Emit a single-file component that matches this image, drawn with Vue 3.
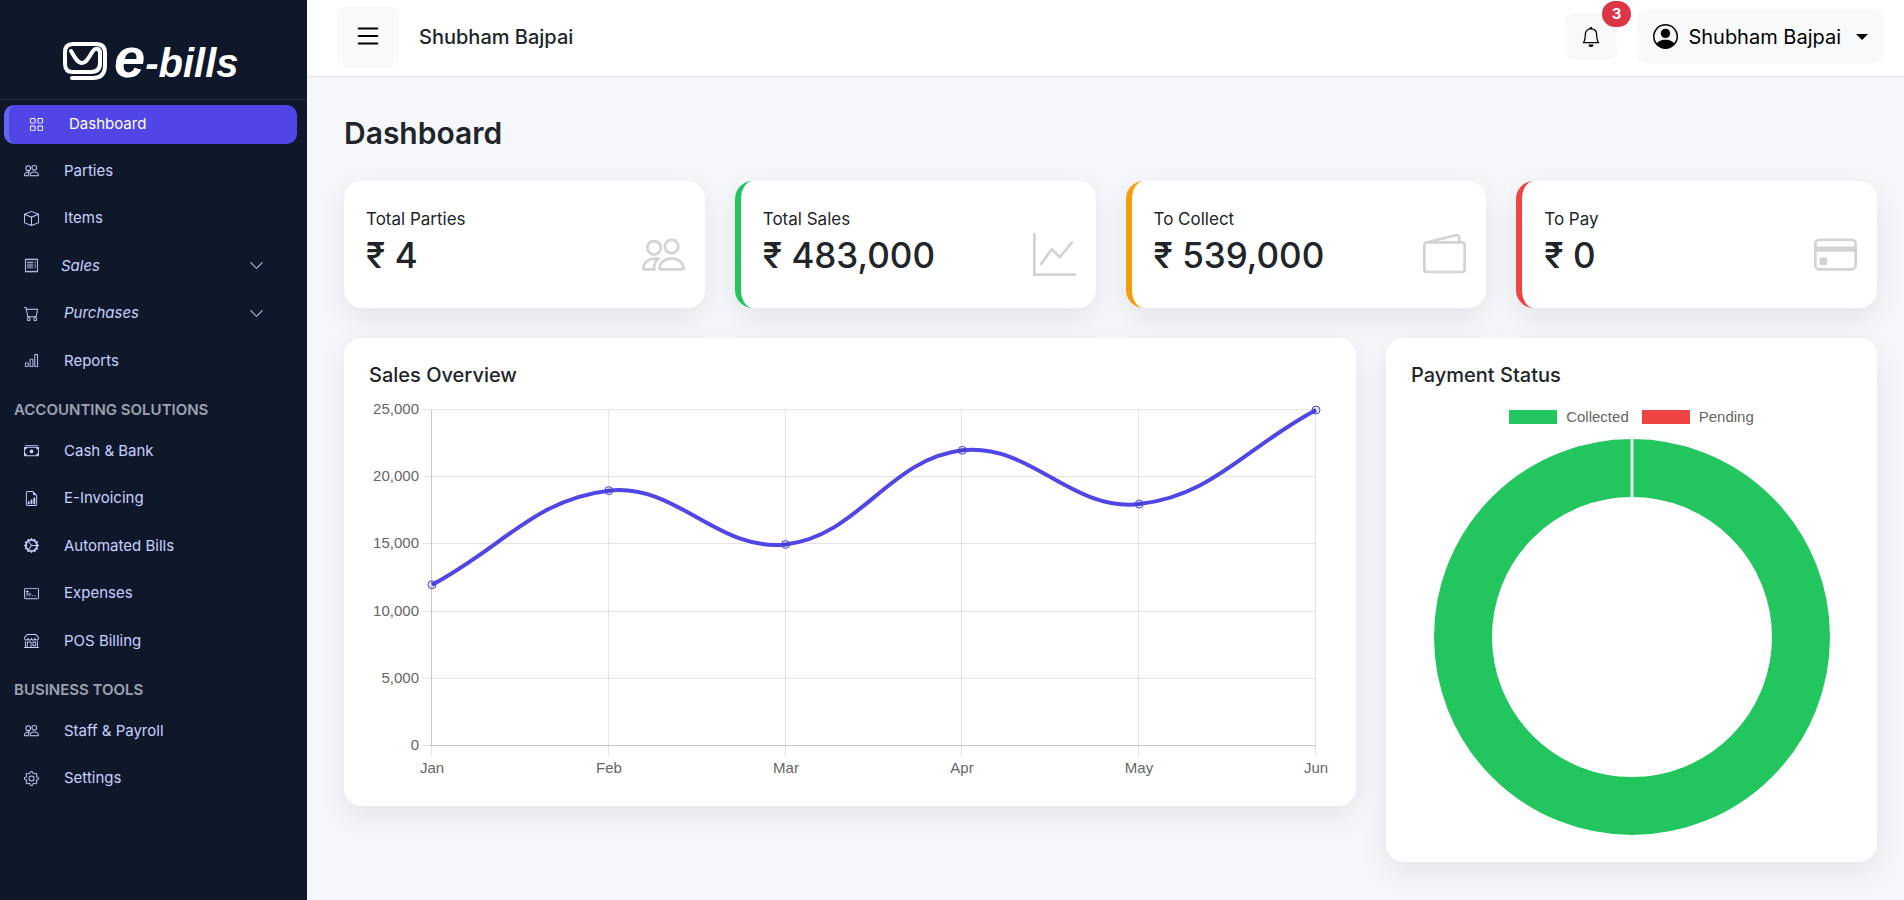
<script setup>
import { computed } from 'vue'

const paths = {
  grid: ['M1 2.5A1.5 1.5 0 0 1 2.5 1h3A1.5 1.5 0 0 1 7 2.5v3A1.5 1.5 0 0 1 5.5 7h-3A1.5 1.5 0 0 1 1 5.5zM2.5 2a.5.5 0 0 0-.5.5v3a.5.5 0 0 0 .5.5h3a.5.5 0 0 0 .5-.5v-3a.5.5 0 0 0-.5-.5zm6.5.5A1.5 1.5 0 0 1 10.5 1h3A1.5 1.5 0 0 1 15 2.5v3A1.5 1.5 0 0 1 13.5 7h-3A1.5 1.5 0 0 1 9 5.5zm1.5-.5a.5.5 0 0 0-.5.5v3a.5.5 0 0 0 .5.5h3a.5.5 0 0 0 .5-.5v-3a.5.5 0 0 0-.5-.5zM1 10.5A1.5 1.5 0 0 1 2.5 9h3A1.5 1.5 0 0 1 7 10.5v3A1.5 1.5 0 0 1 5.5 15h-3A1.5 1.5 0 0 1 1 13.5zm1.5-.5a.5.5 0 0 0-.5.5v3a.5.5 0 0 0 .5.5h3a.5.5 0 0 0 .5-.5v-3a.5.5 0 0 0-.5-.5zm6.5.5A1.5 1.5 0 0 1 10.5 9h3a1.5 1.5 0 0 1 1.5 1.5v3a1.5 1.5 0 0 1-1.5 1.5h-3A1.5 1.5 0 0 1 9 13.5zm1.5-.5a.5.5 0 0 0-.5.5v3a.5.5 0 0 0 .5.5h3a.5.5 0 0 0 .5-.5v-3a.5.5 0 0 0-.5-.5z'],
  people: ['M15 14s1 0 1-1-1-4-5-4-5 3-5 4 1 1 1 1zm-7.978-1L7 12.996c.001-.264.167-1.03.76-1.72C8.312 10.629 9.282 10 11 10c1.717 0 2.687.63 3.24 1.276.593.69.758 1.457.76 1.72l-.008.002-.014.002zM11 7a2 2 0 1 0 0-4 2 2 0 0 0 0 4m3-2a3 3 0 1 1-6 0 3 3 0 0 1 6 0M6.936 9.28a6 6 0 0 0-1.23-.247A7 7 0 0 0 5 9c-4 0-5 3-5 4q0 1 1 1h4.216A2.24 2.24 0 0 1 5 13c0-1.01.377-2.042 1.09-2.904.243-.294.526-.569.846-.816M4.92 10A5.5 5.5 0 0 0 4 13H1c0-.26.164-1.03.76-1.724.545-.636 1.492-1.256 3.16-1.275ZM1.5 5.5a3 3 0 1 1 6 0 3 3 0 0 1-6 0m3-2a2 2 0 1 0 0 4 2 2 0 0 0 0-4'],
  box: ['M8.186 1.113a.5.5 0 0 0-.372 0L1.846 3.5 8 5.961 14.154 3.5zM15 4.239l-6.5 2.6v7.922l6.5-2.6V4.24zM7.5 14.762V6.838L1 4.239v7.923zM7.443.184a1.5 1.5 0 0 1 1.114 0l7.129 2.852A.5.5 0 0 1 16 3.5v8.662a1 1 0 0 1-.629.928l-7.185 2.874a.5.5 0 0 1-.372 0L.63 13.09a1 1 0 0 1-.63-.928V3.5a.5.5 0 0 1 .314-.464z'],
  receipt: [
    'M1.92.506a.5.5 0 0 1 .434.14L3 1.293l.646-.647a.5.5 0 0 1 .708 0L5 1.293l.646-.647a.5.5 0 0 1 .708 0L7 1.293l.646-.647a.5.5 0 0 1 .708 0L9 1.293l.646-.647a.5.5 0 0 1 .708 0l.646.647.646-.647a.5.5 0 0 1 .708 0l.646.647.646-.647a.5.5 0 0 1 .801.13l.5 1A.5.5 0 0 1 15 2v12a.5.5 0 0 1-.053.224l-.5 1a.5.5 0 0 1-.8.13L13 14.707l-.646.647a.5.5 0 0 1-.708 0L11 14.707l-.646.647a.5.5 0 0 1-.708 0L9 14.707l-.646.647a.5.5 0 0 1-.708 0L7 14.707l-.646.647a.5.5 0 0 1-.708 0L5 14.707l-.646.647a.5.5 0 0 1-.708 0L3 14.707l-.646.647a.5.5 0 0 1-.801-.13l-.5-1A.5.5 0 0 1 1 14V2a.5.5 0 0 1 .053-.224l.5-1a.5.5 0 0 1 .367-.27m.217 1.338L2 2.118v11.764l.137.274.51-.51a.5.5 0 0 1 .707 0l.646.647.646-.646a.5.5 0 0 1 .708 0l.646.646.646-.646a.5.5 0 0 1 .708 0l.646.646.646-.646a.5.5 0 0 1 .708 0l.646.646.646-.646a.5.5 0 0 1 .708 0l.646.646.646-.646a.5.5 0 0 1 .708 0l.509.509.137-.274V2.118l-.137-.274-.51.51a.5.5 0 0 1-.707 0L12 1.707l-.646.647a.5.5 0 0 1-.708 0L10 1.707l-.646.647a.5.5 0 0 1-.708 0L8 1.707l-.646.647a.5.5 0 0 1-.708 0L6 1.707l-.646.647a.5.5 0 0 1-.708 0L4 1.707l-.646.647a.5.5 0 0 1-.708 0z',
    'M3 4.5a.5.5 0 0 1 .5-.5h6a.5.5 0 1 1 0 1h-6a.5.5 0 0 1-.5-.5m0 2a.5.5 0 0 1 .5-.5h6a.5.5 0 1 1 0 1h-6a.5.5 0 0 1-.5-.5m0 2a.5.5 0 0 1 .5-.5h6a.5.5 0 1 1 0 1h-6a.5.5 0 0 1-.5-.5m0 2a.5.5 0 0 1 .5-.5h6a.5.5 0 0 1 0 1h-6a.5.5 0 0 1-.5-.5m8-6a.5.5 0 0 1 .5-.5h1a.5.5 0 0 1 0 1h-1a.5.5 0 0 1-.5-.5m0 2a.5.5 0 0 1 .5-.5h1a.5.5 0 0 1 0 1h-1a.5.5 0 0 1-.5-.5m0 2a.5.5 0 0 1 .5-.5h1a.5.5 0 0 1 0 1h-1a.5.5 0 0 1-.5-.5m0 2a.5.5 0 0 1 .5-.5h1a.5.5 0 0 1 0 1h-1a.5.5 0 0 1-.5-.5'
  ],
  cart: ['M0 1.5A.5.5 0 0 1 .5 1H2a.5.5 0 0 1 .485.379L2.89 3H14.5a.5.5 0 0 1 .491.592l-1.5 8A.5.5 0 0 1 13 12H4a.5.5 0 0 1-.491-.408L2.01 3.607 1.61 2H.5a.5.5 0 0 1-.5-.5M3.102 4l1.313 7h8.17l1.313-7zM5 12a2 2 0 1 0 0 4 2 2 0 0 0 0-4m7 0a2 2 0 1 0 0 4 2 2 0 0 0 0-4m-7 1a1 1 0 1 1 0 2 1 1 0 0 1 0-2m7 0a1 1 0 1 1 0 2 1 1 0 0 1 0-2'],
  bars: ['M4 11H2v3h2zm5-4H7v7h2zm5-5v12h-2V2zm-2-1a1 1 0 0 0-1 1v12a1 1 0 0 0 1 1h2a1 1 0 0 0 1-1V2a1 1 0 0 0-1-1zM6 7a1 1 0 0 1 1-1h2a1 1 0 0 1 1 1v7a1 1 0 0 1-1 1H7a1 1 0 0 1-1-1zm-5 4a1 1 0 0 1 1-1h2a1 1 0 0 1 1 1v3a1 1 0 0 1-1 1H2a1 1 0 0 1-1-1z'],
  cash: [
    'M1 3a1 1 0 0 1 1-1h12a1 1 0 0 1 1 1zm7 8a2 2 0 1 0 0-4 2 2 0 0 0 0 4',
    'M0 5a1 1 0 0 1 1-1h14a1 1 0 0 1 1 1v8a1 1 0 0 1-1 1H1a1 1 0 0 1-1-1zm3 0a2 2 0 0 1-2 2v4a2 2 0 0 1 2 2h10a2 2 0 0 1 2-2V7a2 2 0 0 1-2-2z'
  ],
  invoice: [
    'M10 13.5a.5.5 0 0 0 .5.5h1a.5.5 0 0 0 .5-.5v-6a.5.5 0 0 0-.5-.5h-1a.5.5 0 0 0-.5.5zm-2.5.5a.5.5 0 0 1-.5-.5v-4a.5.5 0 0 1 .5-.5h1a.5.5 0 0 1 .5.5v4a.5.5 0 0 1-.5.5zm-3 0a.5.5 0 0 1-.5-.5v-2a.5.5 0 0 1 .5-.5h1a.5.5 0 0 1 .5.5v2a.5.5 0 0 1-.5.5z',
    'M14 14V4.5L9.5 0H4a2 2 0 0 0-2 2v12a2 2 0 0 0 2 2h8a2 2 0 0 0 2-2M9.5 3A1.5 1.5 0 0 0 11 4.5h2V14a1 1 0 0 1-1 1H4a1 1 0 0 1-1-1V2a1 1 0 0 1 1-1h5.5z'
  ],
  gearWide: ['M7.068.727c.243-.97 1.62-.97 1.864 0l.071.286a.96.96 0 0 0 1.622.434l.205-.211c.695-.719 1.888-.03 1.613.931l-.08.284a.96.96 0 0 0 1.187 1.187l.283-.081c.96-.275 1.65.918.931 1.613l-.211.205a.96.96 0 0 0 .434 1.622l.286.071c.97.243.97 1.62 0 1.864l-.286.071a.96.96 0 0 0-.434 1.622l.211.205c.719.695.03 1.888-.931 1.613l-.284-.08a.96.96 0 0 0-1.187 1.187l.081.283c.275.96-.918 1.65-1.613.931l-.205-.211a.96.96 0 0 0-1.622.434l-.071.286c-.243.97-1.62.97-1.864 0l-.071-.286a.96.96 0 0 0-1.622-.434l-.205.211c-.695.719-1.888.03-1.613-.931l.08-.284a.96.96 0 0 0-1.186-1.187l-.284.081c-.96.275-1.65-.918-.931-1.613l.211-.205a.96.96 0 0 0-.434-1.622l-.286-.071c-.97-.243-.97-1.62 0-1.864l.286-.071a.96.96 0 0 0 .434-1.622l-.211-.205c-.719-.695-.03-1.888.931-1.613l.284.08a.96.96 0 0 0 1.187-1.186l-.081-.284c-.275-.96.918-1.65 1.613-.931l.205.211a.96.96 0 0 0 1.622-.434zM12.973 8.5H8.25l-2.834 3.779A4.998 4.998 0 0 0 12.973 8.5m0-1a4.998 4.998 0 0 0-7.557-3.779l2.834 3.78zM5.048 3.967l-.087.065zm-.431.355A4.98 4.98 0 0 0 3.002 8c0 1.455.622 2.765 1.615 3.678L7.375 8zm.344 7.646.087.065z'],
  cardFront: [
    'M14 3a1 1 0 0 1 1 1v8a1 1 0 0 1-1 1H2a1 1 0 0 1-1-1V4a1 1 0 0 1 1-1zM2 2a2 2 0 0 0-2 2v8a2 2 0 0 0 2 2h12a2 2 0 0 0 2-2V4a2 2 0 0 0-2-2z',
    'M2 5.5a.5.5 0 0 1 .5-.5h2a.5.5 0 0 1 .5.5v1a.5.5 0 0 1-.5.5h-2a.5.5 0 0 1-.5-.5zm0 3a.5.5 0 0 1 .5-.5h5a.5.5 0 0 1 0 1h-5a.5.5 0 0 1-.5-.5m0 2a.5.5 0 0 1 .5-.5h1a.5.5 0 0 1 0 1h-1a.5.5 0 0 1-.5-.5m3 0a.5.5 0 0 1 .5-.5h1a.5.5 0 0 1 0 1h-1a.5.5 0 0 1-.5-.5m3 0a.5.5 0 0 1 .5-.5h1a.5.5 0 0 1 0 1h-1a.5.5 0 0 1-.5-.5m3 0a.5.5 0 0 1 .5-.5h1a.5.5 0 0 1 0 1h-1a.5.5 0 0 1-.5-.5'
  ],
  shop: ['M2.97 1.35A1 1 0 0 1 3.73 1h8.54a1 1 0 0 1 .76.35l2.609 3.044A1.5 1.5 0 0 1 16 5.37v.255a2.375 2.375 0 0 1-4.25 1.458A2.37 2.37 0 0 1 9.875 8 2.37 2.37 0 0 1 8 7.083 2.37 2.37 0 0 1 6.125 8a2.37 2.37 0 0 1-1.875-.917A2.375 2.375 0 0 1 0 5.625V5.37a1.5 1.5 0 0 1 .361-.976zm1.78 4.275a1.375 1.375 0 0 0 2.75 0 .5.5 0 0 1 1 0 1.375 1.375 0 0 0 2.75 0 .5.5 0 0 1 1 0 1.375 1.375 0 1 0 2.75 0V5.37a.5.5 0 0 0-.12-.325L12.27 2H3.73L1.12 5.045A.5.5 0 0 0 1 5.37v.255a1.375 1.375 0 0 0 2.75 0 .5.5 0 0 1 1 0M1.5 8.5A.5.5 0 0 1 2 9v6h1v-5a1 1 0 0 1 1-1h3a1 1 0 0 1 1 1v5h6V9a.5.5 0 0 1 1 0v6h.5a.5.5 0 0 1 0 1H.5a.5.5 0 0 1 0-1H1V9a.5.5 0 0 1 .5-.5M4 15h3v-5H4zm5-5a1 1 0 0 1 1-1h2a1 1 0 0 1 1 1v3a1 1 0 0 1-1 1h-2a1 1 0 0 1-1-1zm3 0h-2v3h2z'],
  gear: [
    'M8 4.754a3.246 3.246 0 1 0 0 6.492 3.246 3.246 0 0 0 0-6.492M5.754 8a2.246 2.246 0 1 1 4.492 0 2.246 2.246 0 0 1-4.492 0',
    'M9.796 1.343c-.527-1.79-3.065-1.79-3.592 0l-.094.319a.873.873 0 0 1-1.255.52l-.292-.16c-1.64-.892-3.433.902-2.54 2.541l.159.292a.873.873 0 0 1-.52 1.255l-.319.094c-1.79.527-1.79 3.065 0 3.592l.319.094a.873.873 0 0 1 .52 1.255l-.16.292c-.892 1.64.901 3.434 2.541 2.54l.292-.159a.873.873 0 0 1 1.255.52l.094.319c.527 1.79 3.065 1.79 3.592 0l.094-.319a.873.873 0 0 1 1.255-.52l.292.16c1.64.893 3.434-.902 2.54-2.541l-.159-.292a.873.873 0 0 1 .52-1.255l.319-.094c1.79-.527 1.79-3.065 0-3.592l-.319-.094a.873.873 0 0 1-.52-1.255l.16-.292c.893-1.64-.902-3.433-2.541-2.54l-.292.159a.873.873 0 0 1-1.255-.52zm-2.633.283c.246-.835 1.428-.835 1.674 0l.094.319a1.873 1.873 0 0 0 2.693 1.115l.291-.16c.764-.415 1.6.42 1.184 1.185l-.159.292a1.873 1.873 0 0 0 1.116 2.692l.318.094c.835.246.835 1.428 0 1.674l-.319.094a1.873 1.873 0 0 0-1.115 2.693l.16.291c.415.764-.42 1.6-1.185 1.184l-.291-.159a1.873 1.873 0 0 0-2.693 1.116l-.094.318c-.246.835-1.428.835-1.674 0l-.094-.319a1.873 1.873 0 0 0-2.692-1.115l-.292.16c-.764.415-1.6-.42-1.184-1.185l.159-.291A1.873 1.873 0 0 0 1.945 8.93l-.319-.094c-.835-.246-.835-1.428 0-1.674l.319-.094A1.873 1.873 0 0 0 3.06 4.377l-.16-.292c-.415-.764.42-1.6 1.185-1.184l.292.159a1.873 1.873 0 0 0 2.692-1.115z'
  ],
  chevron: ['M1.646 4.646a.5.5 0 0 1 .708 0L8 10.293l5.646-5.647a.5.5 0 0 1 .708.708l-6 6a.5.5 0 0 1-.708 0l-6-6a.5.5 0 0 1 0-.708'],
  graph: ['M0 0h1v15h15v1H0zm14.817 3.113a.5.5 0 0 1 .07.704l-4.5 5.5a.5.5 0 0 1-.74.037L7.06 6.767l-3.656 5.027a.5.5 0 0 1-.808-.588l4-5.5a.5.5 0 0 1 .758-.06l2.609 2.61 4.15-5.073a.5.5 0 0 1 .704-.07'],
  wallet: ['M12.136.326A1.5 1.5 0 0 1 14 1.78V3h.5A1.5 1.5 0 0 1 16 4.5v9a1.5 1.5 0 0 1-1.5 1.5h-13A1.5 1.5 0 0 1 0 13.5v-9a1.5 1.5 0 0 1 1.432-1.499zM5.562 3H13V1.78a.5.5 0 0 0-.621-.484zM1.5 4a.5.5 0 0 0-.5.5v9a.5.5 0 0 0 .5.5h13a.5.5 0 0 0 .5-.5v-9a.5.5 0 0 0-.5-.5z'],
  card: [
    'M0 4a2 2 0 0 1 2-2h12a2 2 0 0 1 2 2v8a2 2 0 0 1-2 2H2a2 2 0 0 1-2-2zm2-1a1 1 0 0 0-1 1v1h14V4a1 1 0 0 0-1-1zm13 4H1v5a1 1 0 0 0 1 1h12a1 1 0 0 0 1-1z',
    'M2 10a1 1 0 0 1 1-1h1a1 1 0 0 1 1 1v1a1 1 0 0 1-1 1H3a1 1 0 0 1-1-1z'
  ]
}

const groups = [
  {
    title: '',
    items: [
      { label: 'Dashboard', icon: 'grid', active: true },
      { label: 'Parties', icon: 'people' },
      { label: 'Items', icon: 'box' },
      { label: 'Sales', icon: 'receipt', menu: true, tight: true },
      { label: 'Purchases', icon: 'cart', menu: true },
      { label: 'Reports', icon: 'bars' }
    ]
  },
  {
    title: 'ACCOUNTING SOLUTIONS',
    items: [
      { label: 'Cash & Bank', icon: 'cash' },
      { label: 'E-Invoicing', icon: 'invoice' },
      { label: 'Automated Bills', icon: 'gearWide' },
      { label: 'Expenses', icon: 'cardFront' },
      { label: 'POS Billing', icon: 'shop' }
    ]
  },
  {
    title: 'BUSINESS TOOLS',
    items: [
      { label: 'Staff & Payroll', icon: 'people' },
      { label: 'Settings', icon: 'gear' }
    ]
  }
]

const stats = [
  { label: 'Total Parties', value: '₹ 4', icon: 'people', tone: '' },
  { label: 'Total Sales', value: '₹ 483,000', icon: 'graph', tone: 'green' },
  { label: 'To Collect', value: '₹ 539,000', icon: 'wallet', tone: 'amber' },
  { label: 'To Pay', value: '₹ 0', icon: 'card', tone: 'red' }
]

const months = ['Jan', 'Feb', 'Mar', 'Apr', 'May', 'Jun']
const sales = [12000, 19000, 15000, 22000, 18000, 25000]
const plot = { left: 63, right: 947, top: 10, bottom: 346, max: 25000 }

const yOf = v => plot.bottom - (v / plot.max) * (plot.bottom - plot.top)
const xOf = i => plot.left + (i * (plot.right - plot.left)) / (months.length - 1)

const yTicks = [25000, 20000, 15000, 10000, 5000, 0].map(v => ({
  label: v.toLocaleString('en-US'),
  zero: v === 0,
  y: Math.round(yOf(v))
}))
const xTicks = months.map((label, i) => ({ label, x: Math.round(xOf(i)) }))
const points = sales.map((v, i) => ({ x: xOf(i), y: yOf(v) }))

// Cubic spline whose handles follow the neighbouring points, tension 0.4
const line = computed(() => {
  const handles = points.map((p, i) => {
    const prev = points[i - 1] || p
    const next = points[i + 1] || p
    const d01 = Math.hypot(p.x - prev.x, p.y - prev.y)
    const d12 = Math.hypot(next.x - p.x, next.y - p.y)
    const a = (0.4 * d01) / (d01 + d12)
    const b = (0.4 * d12) / (d01 + d12)
    const clamp = y => Math.min(plot.bottom, Math.max(plot.top, y))
    return {
      inX: p.x - a * (next.x - prev.x),
      inY: clamp(p.y - a * (next.y - prev.y)),
      outX: p.x + b * (next.x - prev.x),
      outY: clamp(p.y + b * (next.y - prev.y))
    }
  })
  let d = `M${points[0].x} ${points[0].y}`
  for (let i = 1; i < points.length; i++) {
    const h0 = handles[i - 1]
    const h1 = handles[i]
    d += `C${h0.outX} ${h0.outY} ${h1.inX} ${h1.inY} ${points[i].x} ${points[i].y}`
  }
  return d
})
</script>

<template>
  <div class="app">
    <aside class="sidebar">
      <a class="logo" href="#" aria-label="e-bills">
        <svg class="logo-mark" viewBox="0 0 44 38" aria-hidden="true">
          <path d="M8 9C11 14 14 21 19 21S26 14 30 9C33 5 37 7 37 11V21Q37 30 28 30H10Q2 30 2 22V10Q2 2 10 2H33Q42 2 42 11V23Q42 36 30 36H9" />
        </svg>
        <span class="logo-text"><span class="logo-e">e</span>-bills</span>
      </a>
      <nav class="menu">
        <section v-for="g in groups" :key="g.title">
          <h2 v-if="g.title" class="menu-title">{{ g.title }}</h2>
          <a
            v-for="item in g.items"
            :key="item.label"
            href="#"
            class="menu-item"
            :class="{ active: item.active, parent: item.menu, tight: item.tight }"
          >
            <svg class="menu-icon" viewBox="0 0 16 16" aria-hidden="true">
              <path v-for="d in paths[item.icon]" :key="d" :d="d" />
            </svg>
            <span class="menu-label">{{ item.label }}</span>
            <svg v-if="item.menu" class="menu-icon" viewBox="0 0 16 16" aria-hidden="true">
              <path :d="paths.chevron[0]" />
            </svg>
          </a>
        </section>
      </nav>
    </aside>

    <div class="main">
      <header class="topbar">
        <button class="toggle" type="button" aria-label="Toggle menu">
          <svg viewBox="0 0 16 16" aria-hidden="true">
            <path d="M2.5 12a.5.5 0 0 1 .5-.5h10a.5.5 0 0 1 0 1H3a.5.5 0 0 1-.5-.5m0-4a.5.5 0 0 1 .5-.5h10a.5.5 0 0 1 0 1H3a.5.5 0 0 1-.5-.5m0-4a.5.5 0 0 1 .5-.5h10a.5.5 0 0 1 0 1H3a.5.5 0 0 1-.5-.5" />
          </svg>
        </button>
        <span class="company">Shubham Bajpai</span>
        <button class="bell" type="button" aria-label="Notifications">
          <svg viewBox="0 0 16 16" aria-hidden="true">
            <path d="M8 16a2 2 0 0 0 2-2H6a2 2 0 0 0 2 2M8 1.918l-.797.161A4 4 0 0 0 4 6c0 .628-.134 2.197-.459 3.742-.16.767-.376 1.566-.663 2.258h10.244c-.287-.692-.502-1.49-.663-2.258C12.134 8.197 12 6.628 12 6a4 4 0 0 0-3.203-3.92zM14.22 12c.223.447.481.801.78 1H1c.299-.199.557-.553.78-1C2.68 10.2 3 6.88 3 6c0-2.42 1.72-4.44 4.005-4.901a1 1 0 1 1 1.99 0A5 5 0 0 1 13 6c0 .88.32 4.2 1.22 6" />
          </svg>
          <span class="badge">3</span>
        </button>
        <button class="user" type="button">
          <svg class="avatar" viewBox="0 0 16 16" aria-hidden="true">
            <path d="M11 6a3 3 0 1 1-6 0 3 3 0 0 1 6 0" />
            <path fill-rule="evenodd" d="M0 8a8 8 0 1 1 16 0A8 8 0 0 1 0 8m8-7a7 7 0 0 0-5.468 11.37C3.242 11.226 4.805 10 8 10s4.757 1.225 5.468 2.37A7 7 0 0 0 8 1" />
          </svg>
          <span>Shubham Bajpai</span>
          <svg class="caret" viewBox="0 0 12 6" aria-hidden="true"><path d="M0 0h12L6 6z" /></svg>
        </button>
      </header>

      <main class="content">
        <h1>Dashboard</h1>

        <div class="stats">
          <article v-for="s in stats" :key="s.label" class="card stat" :class="s.tone">
            <div>
              <p class="stat-label">{{ s.label }}</p>
              <p class="stat-value">{{ s.value }}</p>
            </div>
            <svg class="stat-icon" viewBox="0 0 16 16" aria-hidden="true">
              <path v-for="d in paths[s.icon]" :key="d" :d="d" />
            </svg>
          </article>
        </div>

        <div class="charts">
          <section class="card panel wide">
            <h2 class="panel-title">Sales Overview</h2>
            <svg class="chart" viewBox="0 0 962 381" role="img" aria-label="Sales by month">
              <g v-for="t in yTicks" :key="t.label">
                <line class="grid" :x1="plot.left - 10" :x2="plot.right" :y1="t.y - 0.5" :y2="t.y - 0.5" />
                <line v-if="t.zero" class="axis" :x1="plot.left" :x2="plot.right" :y1="t.y - 0.5" :y2="t.y - 0.5" />
                <text class="tick" :x="plot.left - 13" :y="t.y + 4" text-anchor="end">{{ t.label }}</text>
              </g>
              <g v-for="(t, i) in xTicks" :key="t.label">
                <line class="grid" :x1="t.x - 0.5" :x2="t.x - 0.5" :y1="plot.top" :y2="plot.bottom + 10" />
                <line v-if="i === 0" class="axis" :x1="t.x - 0.5" :x2="t.x - 0.5" :y1="plot.top" :y2="plot.bottom" />
                <text class="tick" :x="t.x" :y="plot.bottom + 27" text-anchor="middle">{{ t.label }}</text>
              </g>
              <path class="series" :d="line" />
              <circle v-for="p in points" :key="p.x" class="point" :cx="p.x" :cy="p.y" r="4" />
            </svg>
          </section>

          <section class="card panel narrow">
            <h2 class="panel-title">Payment Status</h2>
            <ul class="legend">
              <li><span class="swatch collected"></span>Collected</li>
              <li><span class="swatch pending"></span>Pending</li>
            </ul>
            <svg class="chart" viewBox="0 0 441 398" role="img" aria-label="Collected 100%, pending 0%">
              <circle class="ring" cx="221" cy="198" r="169" />
              <line class="split" x1="221" x2="221" y1="0" y2="58" />
            </svg>
          </section>
        </div>
      </main>
    </div>
  </div>
</template>

<style>
body {
  margin: 0;
  background: #f5f7fb;
}
</style>

<style scoped>
.app {
  display: flex;
  min-height: 100vh;
  background: #f5f7fb;
  color: #212529;
  font-family: Inter, 'Liberation Sans', sans-serif;
  line-height: 1.5;
}
.app *,
.app *::before {
  box-sizing: border-box;
}
h1,
h2,
p,
ul {
  margin: 0;
  padding: 0;
}
svg {
  flex: none;
  fill: currentColor;
}
button {
  border: 0;
  font-family: inherit;
  color: #000;
  background: #f8f9fa;
  cursor: pointer;
}

.sidebar {
  flex: none;
  width: 307px;
  background: #0f172a;
  color: #c7d2fe;
}
.logo {
  display: flex;
  align-items: flex-start;
  gap: 7px;
  height: 100px;
  padding: 42px 0 0 63px;
  border-bottom: 1px solid #273043;
  color: #fff;
  text-decoration: none;
}
.logo-mark {
  width: 44px;
  height: 38px;
  fill: none;
  stroke: #fff;
  stroke-width: 4;
  stroke-linecap: round;
  stroke-linejoin: round;
}
.logo-text {
  font: italic bold 40px/32px 'Liberation Sans', Arial, sans-serif;
}
.logo-e {
  font-size: 56px;
}
.menu {
  padding-top: 5px;
}
.menu-title {
  padding: 10px 14px;
  font-size: 15px;
  font-weight: 600;
  color: #9ca3af;
}
.menu-item {
  display: flex;
  align-items: center;
  gap: 25px;
  margin: 0 10px 9px 4px;
  padding: 8px 33px 8px 20px;
  border-radius: 10px;
  font-size: 15px;
  color: inherit;
  text-decoration: none;
}
.menu-item.active {
  margin-bottom: 8px;
  border-left: 5px solid #6366f1;
  background: #4f46e5;
  color: #fff;
}
.menu-item.parent {
  font-style: italic;
}
.menu-item.tight {
  gap: 22px;
}
.menu-icon {
  width: 15px;
  height: 15px;
}
.menu-label {
  flex: 1;
}

.main {
  flex: 1;
  min-width: 0;
}
.topbar {
  display: flex;
  align-items: center;
  height: 77px;
  padding: 0 20px 3px 30px;
  border-bottom: 1px solid #dee2e6;
  background: #fff;
}
.toggle {
  display: grid;
  place-items: center;
  width: 62px;
  height: 62px;
  padding: 0 0 2px;
  border-radius: 10px;
}
.toggle svg {
  width: 30px;
  height: 30px;
}
.company {
  margin-left: 20px;
  font-size: 20px;
  font-weight: 500;
}
.bell {
  position: relative;
  display: grid;
  place-items: center;
  width: 52px;
  height: 47px;
  margin-left: auto;
  padding: 0;
  border-radius: 10px;
}
.bell svg {
  width: 20px;
  height: 20px;
}
.badge {
  position: absolute;
  top: -12px;
  right: -14px;
  padding: 0 10px;
  border-radius: 13px;
  background: #dc3545;
  color: #fff;
  font-size: 15px;
  font-weight: 700;
  line-height: 26px;
}
.user {
  display: flex;
  align-items: center;
  height: 55px;
  margin-left: 20px;
  padding: 0 16px;
  border-radius: 10px;
  font-size: 20px;
}
.avatar {
  width: 25px;
  height: 25px;
  margin-right: 10px;
}
.caret {
  width: 12px;
  height: 6px;
  margin-left: 15px;
}

.content {
  padding: 38px 27px 38px 37px;
}
h1 {
  font-size: 30px;
  font-weight: 600;
  line-height: 36px;
}
.card {
  border-radius: 18px;
  background: #fff;
  box-shadow: 0 10px 30px rgba(0, 0, 0, 0.08);
}
.stats {
  display: grid;
  grid-template-columns: repeat(4, 1fr);
  gap: 30px;
  margin-top: 30px;
}
.stat {
  display: flex;
  align-items: flex-start;
  justify-content: space-between;
  padding: 25px 20px 30px 22px;
}
.stat.green {
  border-left: 6px solid #22c55e;
}
.stat.amber {
  border-left: 6px solid #f59e0b;
}
.stat.red {
  border-left: 6px solid #ef4444;
}
.stat-label {
  font-size: 17px;
  line-height: 26px;
}
.stat-value {
  font-size: 35px;
  font-weight: 500;
  line-height: 46px;
}
.stat-icon {
  width: 43px;
  height: 43px;
  margin-top: 27px;
  color: #d3d3d3;
}

.charts {
  display: grid;
  grid-template-columns: repeat(12, 1fr);
  align-items: start;
  gap: 30px;
  margin-top: 30px;
}
.panel {
  padding: 25px;
}
.wide {
  grid-column: span 8;
}
.narrow {
  grid-column: span 4;
}
.panel-title {
  margin-bottom: 13px;
  font-size: 20px;
  font-weight: 500;
  line-height: 24px;
}
.chart {
  display: block;
  width: 100%;
}
.grid {
  stroke: rgba(0, 0, 0, 0.1);
}
.axis {
  stroke: rgba(0, 0, 0, 0.12);
}
.tick {
  fill: #666;
  font: 15px 'Liberation Sans', Arial, sans-serif;
}
.series {
  fill: none;
  stroke: #4f46e5;
  stroke-width: 4;
}
.point {
  fill: rgba(0, 0, 0, 0.1);
  stroke: #4f46e5;
  stroke-width: 1;
}
.legend {
  display: flex;
  justify-content: center;
  gap: 13px;
  height: 39px;
  padding-top: 8px;
  list-style: none;
  color: #666;
  font: 15px/18px 'Liberation Sans', Arial, sans-serif;
}
.legend li {
  display: flex;
  align-items: center;
  gap: 9px;
  height: 18px;
}
.swatch {
  width: 48px;
  height: 14px;
}
.collected {
  background: #22c55e;
}
.pending {
  background: #ef4444;
}
.ring {
  fill: none;
  stroke: #22c55e;
  stroke-width: 58;
}
.split {
  stroke: #e4f7eb;
  stroke-width: 3;
}
</style>
